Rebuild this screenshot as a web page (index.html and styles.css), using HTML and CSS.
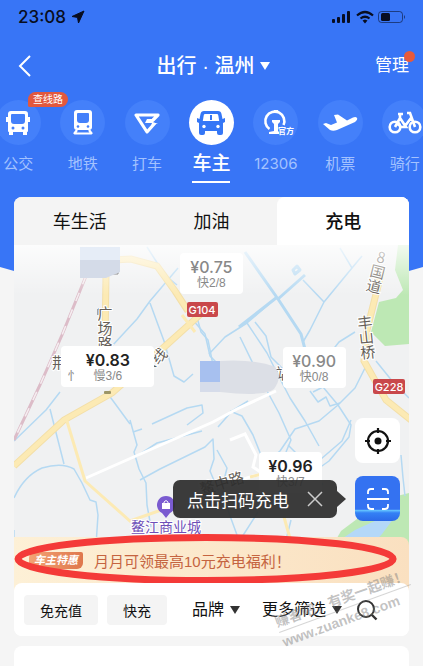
FILE: index.html
```html
<!DOCTYPE html>
<html lang="zh-CN">
<head>
  <meta charset="UTF-8">
  <meta name="viewport" content="width=device-width, initial-scale=1.0">
  <title>出行 · 温州</title>
  <link rel="stylesheet" href="styles.css">
</head>
<body>
  <div class="screen">
    <header class="hero">
      <div class="status">
        <span class="time">23:08</span>
        <svg width="14" height="14" viewBox="0 0 14 14"><path d="M13 1L1 6.500l5.500.900L7.500 13z" fill="#080d20" stroke="#080d20" stroke-linejoin="round"/></svg>
        <svg class="status-right" width="76" height="14" viewBox="0 0 76 14">
          <g fill="#080d20">
            <rect x="1" y="9" width="3" height="4" rx="1"/>
            <rect x="6" y="7" width="3" height="6" rx="1"/>
            <rect x="11" y="4" width="3" height="9" rx="1"/>
            <rect x="16" y="1" width="3" height="12" rx="1"/>
            <path d="M34 9.500l2.500 1-2.500 3-2.500-3z"/>
            <rect x="50" y="3" width="9" height="8" rx="1.500"/>
            <path d="M73 5q2 2 0 4z" opacity=".6"/>
          </g>
          <g fill="none" stroke="#080d20">
            <path d="M26 5.500q8-7 16 0M29.500 8.500q4.500-3.500 9 0" stroke-width="2.200"/>
            <rect x="47.500" y="1.500" width="24" height="11" rx="3" opacity=".55"/>
          </g>
        </svg>
      </div>

      <div class="navbar">
        <button class="back" aria-label="返回">
          <svg width="14" height="22" viewBox="0 0 14 22"><path d="M12 1L2 11l10 10" fill="none" stroke="#fff" stroke-width="2"/></svg>
        </button>
        <button class="city">出行 · 温州 <i class="arrow"></i></button>
        <a class="manage" href="#">管理</a>
      </div>

      <nav class="cats">
        <a class="cat" href="#">
          <span class="cat-icon">
            <svg width="26" height="26" viewBox="0 0 26 26">
              <path d="M6 1h14q3 0 3 3v3h2v5h-2v9q0 1-1 1v3h-4v-3H8v3H4v-3q-1 0-1-1v-9H1V7h2V4q0-3 3-3z" fill="#fff"/>
              <path d="M7 4h12q1 0 1 1v6q0 3-3 3H9q-3 0-3-3V5q0-1 1-1z" fill="#4480fa"/>
              <circle cx="8" cy="18" r="1.500" fill="#4480fa"/><circle cx="18" cy="18" r="1.500" fill="#4480fa"/>
            </svg>
          </span>
          <span class="cat-name">公交</span>
          <span class="cat-badge">查线路</span>
        </a>
        <a class="cat" href="#">
          <span class="cat-icon">
            <svg width="26" height="26" viewBox="0 0 26 26">
              <path d="M7 0h12q3 0 3 3v14q0 3-3 3H7q-3 0-3-3V3q0-3 3-3z" fill="#fff"/>
              <path d="M8 3h10q1 0 1 1v6q0 3-3 3h-6q-3 0-3-3V4q0-1 1-1z" fill="#4480fa"/>
              <circle cx="8" cy="16.500" r="1.300" fill="#4480fa"/><circle cx="18" cy="16.500" r="1.300" fill="#4480fa"/>
              <path d="M7 20l-3 4m15-4l3 4M5 23.500h16" stroke="#fff" stroke-width="2.200"/>
            </svg>
          </span>
          <span class="cat-name">地铁</span>
        </a>
        <a class="cat" href="#">
          <span class="cat-icon">
            <svg width="28" height="26" viewBox="0 0 28 26">
              <path d="M20 10l5-5H3l11 17 8-9" fill="none" stroke="#fff" stroke-width="3.200" stroke-linejoin="round"/>
              <path d="M14 9h8l-2 4h5l-7 3 1-3h-7z" fill="#fff"/>
            </svg>
          </span>
          <span class="cat-name">打车</span>
        </a>
        <a class="cat active" href="#">
          <span class="cat-icon">
            <svg width="30" height="28" viewBox="0 0 30 28">
              <path d="M8 2h14q3 0 3.500 3l1 5 2.500-1v4l-2 1v10q0 2-2 2h-2q-2 0-2-2v-2H9v2q0 2-2 2H5q-2 0-2-2V14l-2-1V9l2.500 1 1-5Q5 2 8 2z" fill="#3476f6"/>
              <path d="M9 5h12q1 0 1.200 1l1 6H6.800l1-6Q8 5 9 5z" fill="#fff"/>
              <path d="M14 6h2v5h-2z" fill="#3476f6"/>
              <circle cx="8" cy="17.500" r="1.700" fill="#fff"/><circle cx="22" cy="17.500" r="1.700" fill="#fff"/>
            </svg>
          </span>
          <span class="cat-name">车主</span>
        </a>
        <a class="cat" href="#">
          <span class="cat-icon">
            <svg class="rail" width="32" height="28" viewBox="0 0 32 28">
              <path d="M6.500 20a9.500 9.500 0 1 1 14-4" fill="none" stroke="#fff" stroke-width="2.600"/>
              <path d="M11 1h4l1 3h-6zM9 11h8v2l-2 2v7l1 1v2H6v-2l5-1v-7l-2-2z" fill="#fff"/>
              <text x="15" y="25" font-size="8" font-weight="700" fill="#fff">官方</text>
            </svg>
          </span>
          <span class="cat-name num">12306</span>
        </a>
        <a class="cat" href="#">
          <span class="cat-icon">
            <svg width="36" height="26" viewBox="0 0 36 26">
              <path d="M1 14l3-1 5 2 6-2.500L12 5l4-.5 9 6 6-3q3-1 4 .5t-2 4L15 20q-4 1.500-7 0z" fill="#fff"/>
            </svg>
          </span>
          <span class="cat-name">机票</span>
        </a>
        <a class="cat" href="#">
          <span class="cat-icon">
            <svg width="34" height="26" viewBox="0 0 34 26">
              <g fill="none" stroke="#fff" stroke-width="2.600">
                <circle cx="7" cy="17" r="5.300"/><circle cx="27" cy="17" r="5.300"/>
                <path d="M7 17l5-9 6 9h-5l-4-4M17 16l6-8M19 3h3l5 14M10 4h5M12 4v5"/>
              </g>
            </svg>
          </span>
          <span class="cat-name">骑行</span>
        </a>
      </nav>
    </header>

    <main class="card">
      <nav class="tabs">
        <a href="#">车生活</a>
        <a href="#">加油</a>
        <a class="active" href="#">充电</a>
      </nav>

      <div class="map">
        <svg class="map-base" viewBox="14 245 395 300" preserveAspectRatio="xMidYMid slice">
          <defs>
            <linearGradient id="fade" x1="0" y1="0" x2="0" y2="1">
              <stop offset="0" stop-color="#fff"/>
              <stop offset="1" stop-color="#fff" stop-opacity="0"/>
            </linearGradient>
          </defs>
          <rect x="14" y="245" width="395" height="300" fill="#f0f1f2"/>

          <!-- 绿地 -->
          <g fill="#bde8b4">
            <path d="M398 245h11v99l-24 2-14-14 8-30 17-4 7-8-8-20z"/>
            <path d="M333 545l8-14 24-18 24-15 20-5v52z"/>
          </g>
          <path d="M340 540l15-10 22-10 10-9 10 3-15 20-10 11z" fill="#b4d8f8"/>

          <!-- 水系 -->
          <g class="river">
            <path d="M147 247l18 28 12 10M178 268l-28 33-13 18-25 27M150 303l14 38 10 35 10 6 9-8M192 319l13 15 5 22 14 14"/>
            <path d="M14 498q10-22 28-30 20-6 32 1l8 14 8 17 6 2 2 13-2 30M14 530v15"/>
            <path d="M60 392l-14 18-32 31M50 409l14 55M127 394m3 26l7 25-3 7 5 17 7 14 1 22 4 22M108 394l22 30"/>
            <path d="M152 424l35-16 15-3 1 8-16 12M137 456l20-13 45-12M140 480l20-11 45-22 8-8 1 20-4 12 8 19"/>
            <path d="M247 323l20 30 9 18 14 27 15 23 14 25M255 322l11 14 5 21 12 12M276 298l-29 25-22 14-16 17"/>
            <path d="M303 280l21 22-14 28-7 12M340 248l12 20 10-12M352 268l-28 34"/>
            <path d="M240 337l20 41 19 35 12 27-5 12M355 332l-16 10-19 24M365 368l-10 20-17 17-15-18-10 5M338 405l13 20-2 12-20 24-24 17M338 405l-19 16-24 8-15 22-10 8"/>
            <path d="M376 361l17 21 16 16M230 411l12 5 11 19 8 20 3 35M218 427l14-16 16-10M288 445l25 25 10 15"/>
            <path d="M351 420l-9 21-35 30M401 455l2 23 2 18M217 450l10 18-5 20 7 25 8 22M258 512l-16 25M291 520l-5 20"/>
            <path d="M310 391l8 11 8-5 4 9 10-3M195 310l6 22 7 8 5 25M142 429l-9 3"/>
          </g>
          <g class="river thick">
            <path d="M245 252l33 47 23 35 5 19M276 298l-37 29M305 275l-27 24"/>
            <path d="M293 270l4-4 3 4-5 4z"/>
          </g>

          <!-- 道路 -->
          <g class="lane">
            <path d="M86 478l127-56 24-13 39-18M230 440l15-6 11 21-3 12 18 12M220 487l33-11 18-3"/>
          </g>
          <g class="road-edge">
            <path d="M14 466l50-46 48-27 50-44 30-27 13-12M105 345l1-70 8-15 17-1 26 7 18 25 13 20M382 270l-15 60-3 31 22 39 25 20"/>
          </g>
          <g class="road">
            <path d="M14 466l50-46 48-27 50-44 30-27 13-12M105 345l1-70 8-15 17-1 26 7 18 25 13 20M382 270l-15 60-3 31 22 39 25 20"/>
          </g>
          <path class="road thin" d="M66 418l19 63 45 40 34-12M250 477l20-5M284 517l7 25M182 315l13 17"/>
          <path d="M86 276L62 335 40 385 14 440" fill="none" stroke="#dcbcc8" stroke-width="3"/>
          <path d="M86 276L62 335 40 385 14 440" fill="none" stroke="#f5eef1" stroke-width="1.500" stroke-dasharray="9 9"/>
          <rect x="104" y="391" width="7" height="3" rx="1" fill="#9c9567"/>
          <path d="M98 315v-6h12M112 274h6v-4" fill="none" stroke="#555" stroke-width="1"/>

          <!-- 地名 -->
          <g class="road-name">
            <text class="down" x="105" y="306">广场路</text>
            <text x="52" y="368">荆</text>
            <text x="146" y="375" transform="rotate(-42 146 375)">公线</text>
            <text class="down" x="364" y="315" transform="rotate(-6 364 315)">丰山桥</text>
            <text class="down" x="383" y="250" transform="rotate(14 383 250)">8国道</text>
            <text x="202" y="495" transform="rotate(-17 202 495)">鳌中路</text>
            <text x="275" y="379">站</text>
          </g>
          <rect x="187" y="302" width="31" height="15" rx="2" fill="#c9484b"/>
          <rect x="373" y="379" width="32" height="15" rx="2" fill="#c9484b"/>
          <g class="shield">
            <text x="202" y="314">G104</text>
            <text x="389" y="391">G228</text>
          </g>

          <path d="M166 518l-4-5a9 9 0 1 1 8 0z" fill="#7a5bd0"/>
          <path d="M162 503h8v6h-8z" fill="#fff"/>
          <path d="M164 503v-1q2-3 4 0v1" fill="none" stroke="#fff"/>
          <text class="mall" x="131" y="532">鳌江商业城</text>

          <rect x="14" y="245" width="395" height="50" fill="url(#fade)" opacity=".8"/>
          <path d="M80 247h40v13H80z" fill="#e6edf7"/>
          <path d="M80 260h40v12l-14 6H80z" fill="#d4dbe8"/>
          <path d="M200 361h20v21h-20z" fill="#a7c0ef"/>
          <path d="M200 382h20v10h-20z" fill="#d6dcea"/>
          <path d="M220 361q35-2 55 6 8 10-1 22-10 8-54 3z" fill="#dcdfe6"/>
        </svg>

        <div class="pin pin-075"><b>¥0.75</b><span>快2/8</span></div>
        <div class="pin pin-083 strong"><i class="cut">忄</i><b>¥0.83</b><span>慢3/6</span></div>
        <div class="pin pin-090"><b>¥0.90</b><span>快0/8</span></div>
        <div class="pin pin-096 strong"><b>¥0.96</b><span>快3/7</span></div>

        <div class="tools">
          <button class="tool" aria-label="定位">
            <svg width="26" height="26" viewBox="0 0 26 26">
              <circle cx="13" cy="13" r="10" fill="none" stroke="#111" stroke-width="2.200"/>
              <circle cx="13" cy="13" r="3.500" fill="#111"/>
              <path d="M13 0v5M13 21v5M0 13h5M21 13h5" stroke="#111" stroke-width="2.200"/>
            </svg>
          </button>
          <button class="tool scan" aria-label="扫码充电">
            <svg width="24" height="24" viewBox="0 0 24 24">
              <path d="M2 7V5q0-3 3-3h3M16 2h3q3 0 3 3v2M2 17v2q0 3 3 3h3M16 22h3q3 0 3-3v-2M1 12h22" fill="none" stroke="#fff" stroke-width="1.800"/>
            </svg>
          </button>
        </div>
        <div class="tip">
          点击扫码充电
          <button aria-label="关闭">
            <svg width="16" height="16" viewBox="0 0 16 16"><path d="M1 1l14 14M15 1L1 15" stroke="#ccc" stroke-width="1.500"/></svg>
          </button>
        </div>
      </div>

      <a class="banner" href="#">
        <span class="banner-tag">车主特惠</span>
        <span>月月可领最高10元充电福利！</span>
        <svg class="circle-mark" viewBox="0 0 382 50" preserveAspectRatio="none">
          <ellipse cx="191" cy="25" rx="187" ry="21.500" fill="none" stroke="#f43a38" stroke-width="7"/>
        </svg>
      </a>

      <div class="filters">
        <button class="chip">免充值</button>
        <button class="chip">快充</button>
        <label class="drop brand">
          <select aria-label="品牌"><option>品牌</option></select>
          <i class="arrow"></i>
        </label>
        <label class="drop">
          <select aria-label="更多筛选"><option>更多筛选</option></select>
          <i class="arrow"></i>
        </label>
        <button class="search" aria-label="搜索">
          <svg width="22" height="22" viewBox="0 0 22 22"><circle cx="10" cy="10" r="8" fill="none" stroke="#333" stroke-width="2"/><path d="M15.500 15.500l5 5" stroke="#333" stroke-width="2.400"/></svg>
        </button>
        <div class="watermark">
          <span>赚客吧，有奖一起赚！</span>
          <span>www.zuanke8.com</span>
        </div>
      </div>
    </main>

    <section class="next-card"></section>
  </div>
</body>
</html>
```
FILE: styles.css
```css
* {
  box-sizing: border-box;
}
body {
  margin: 0;
  background: #fff;
  color: #111;
  font-family: "Liberation Sans", "Noto Sans CJK SC", sans-serif;
}
a {
  color: inherit;
  text-decoration: none;
}
button {
  border: 0;
  padding: 0;
  background: none;
  color: inherit;
  font: inherit;
  white-space: nowrap;
}
svg {
  display: block;
}
.screen {
  min-height: 100vh;
  margin-right: 4px;
  background: #f5f5f5;
  overflow: hidden;
}

/* 顶部 */
.hero {
  background: #3875f6;
  color: #fff;
  padding-bottom: 96px;
  clip-path: polygon(0 0, 100% 0, 100% 267px, 90% 100%, 10% 100%, 0 267px);
}
.status {
  display: flex;
  align-items: center;
  gap: 5px;
  height: 34px;
  padding: 0 18px;
  color: #080d20;
}
.time {
  font: 500 17px Inter, sans-serif;
}
.status-right {
  margin-left: auto;
  margin-right: -2px;
}
.navbar {
  display: grid;
  grid-template-columns: 1fr auto 1fr;
  align-items: center;
  height: 64px;
  padding: 0 14px 0 18px;
}
.back {
  justify-self: start;
}
.city {
  display: flex;
  align-items: center;
  gap: 6px;
  font-size: 20px;
  line-height: 24px;
  font-weight: 500;
}
.arrow {
  border: 5px solid transparent;
  border-top: 8px solid currentColor;
  border-bottom: 0;
}
.manage {
  position: relative;
  justify-self: end;
  font-size: 17px;
  line-height: 24px;
}
.manage::after {
  content: "";
  position: absolute;
  top: -3px;
  right: -6px;
  width: 11px;
  height: 11px;
  border-radius: 50%;
  background: #e65a3c;
}
.cats {
  display: flex;
  margin: 0 -14px;
  padding-top: 2px;
}
.cat {
  position: relative;
  flex: 1;
  display: flex;
  flex-direction: column;
  align-items: center;
  gap: 8px;
  font-size: 15px;
  color: #a3c2ff;
}
.cat-icon {
  display: flex;
  align-items: center;
  justify-content: center;
  width: 45px;
  height: 45px;
  border-radius: 50%;
  background: #4480fa;
}
.rail {
  margin-left: 6px;
}
.cat-name {
  height: 30px;
  line-height: 22px;
}
.num {
  font-family: Inter, sans-serif;
}
.cat.active {
  color: #fff;
  font-size: 19px;
  font-weight: 500;
}
.active .cat-icon {
  background: #fff;
}
.active .cat-name {
  border-bottom: 2px solid #fff;
}
.cat-badge {
  position: absolute;
  top: -8px;
  left: 42px;
  padding: 0 5px;
  border-radius: 8px 8px 8px 2px;
  background: #e2583e;
  color: #fff;
  font-size: 10px;
  line-height: 15px;
  white-space: nowrap;
}

/* 主卡片 */
.card {
  position: relative;
  margin: -82px 14px 10px;
  border-radius: 8px;
  background: #fff;
}
.tabs {
  display: flex;
  height: 48px;
  border-radius: 8px 8px 0 0;
  background: #f4f4f4;
}
.tabs a {
  flex: 1;
  text-align: center;
  font-size: 18px;
  line-height: 50px;
}
.tabs .active {
  background: #fff;
  border-radius: 8px 8px 0 0;
  font-weight: 500;
}

/* 地图 */
.map {
  position: relative;
  aspect-ratio: 395 / 300;
}
.map-base {
  width: 100%;
  height: 100%;
  font-family: "Noto Sans CJK SC", sans-serif;
}
.river {
  fill: none;
  stroke: #b5d9f2;
  stroke-width: 1.5;
  stroke-linejoin: round;
}
.thick {
  stroke-width: 3;
}
.lane {
  fill: none;
  stroke: #fff;
  stroke-width: 3;
}
.road-edge {
  fill: none;
  stroke: #f3dfa8;
  stroke-width: 7;
}
.road {
  fill: none;
  stroke: #fceab4;
  stroke-width: 5;
}
.road.thin {
  stroke-width: 3;
}
.road-name {
  font-size: 15px;
  fill: #665f58;
  stroke: #fff;
  stroke-width: 2px;
  paint-order: stroke;
}
.down {
  writing-mode: vertical-rl;
  text-orientation: upright;
}
.shield {
  font: 500 11px Inter, sans-serif;
  fill: #fff;
  text-anchor: middle;
}
.mall {
  font-size: 14px;
  fill: #6e4fb8;
  stroke: #fff;
  stroke-width: 2px;
  paint-order: stroke;
}
.pin {
  position: absolute;
  display: flex;
  flex-direction: column;
  align-items: center;
  width: 63px;
  height: 41px;
  padding-top: 4px;
  border-radius: 4px;
  background: #fff;
  color: #888;
}
.pin b {
  font: 500 16px/20px Inter, sans-serif;
}
.pin span {
  font-size: 12px;
  line-height: 13px;
}
.pin .cut {
  position: absolute;
  left: 6px;
  top: 24px;
  font-size: 12px;
  font-style: normal;
  line-height: 13px;
}
.strong b {
  color: #222;
  font-weight: 600;
}
.pin-075 {
  left: 42%;
  top: 8px;
}
.pin-083 {
  left: 12%;
  top: 101px;
  width: 93px;
}
.pin-090 {
  left: 68%;
  top: 102px;
}
.pin-096 {
  left: 62%;
  top: 207px;
}
.tools {
  position: absolute;
  right: 9px;
  top: 173px;
  display: grid;
  gap: 13px;
}
.tool {
  display: flex;
  align-items: center;
  justify-content: center;
  width: 45px;
  height: 45px;
  border-radius: 8px;
  background: #fff;
}
.scan {
  background: linear-gradient(#3472f1 74%, #65c5ff 76%, #3481f5 82%, #2c69e9);
}
.tip {
  position: absolute;
  right: 72px;
  top: 235px;
  display: flex;
  align-items: center;
  gap: 18px;
  height: 38px;
  padding: 0 14px;
  border-radius: 7px;
  background: rgba(45, 45, 45, 0.93);
  color: #fff;
  font-size: 17px;
  white-space: nowrap;
}
.tip::after {
  content: "";
  position: absolute;
  left: 100%;
  top: 11px;
  border: 8px solid transparent;
  border-left: 9px solid rgba(45, 45, 45, 0.93);
  border-right: 0;
}

/* 活动横幅 */
.banner {
  position: relative;
  display: flex;
  align-items: center;
  gap: 11px;
  height: 54px;
  margin-top: -8px;
  padding: 0 15px 8px;
  border-radius: 0 8px 0 0;
  background: linear-gradient(90deg, #fdf0d6, #fae0c0);
  color: #c56440;
  font-size: 15px;
}
.banner-tag {
  padding: 0 5px;
  border-radius: 6px 2px 6px 2px;
  background: linear-gradient(90deg, #f3a374, #df774c);
  color: #fff;
  font-size: 11px;
  font-weight: 700;
  font-style: italic;
  line-height: 17px;
}
.circle-mark {
  position: absolute;
  left: 0;
  top: -3px;
  width: 97%;
  height: 50px;
}

/* 筛选 */
.filters {
  position: relative;
  display: flex;
  align-items: center;
  height: 53px;
  margin-top: -8px;
  padding: 0 31px 0 10px;
  border-radius: 8px;
  background: #fff;
}
.chip {
  height: 30px;
  margin-right: 9px;
  padding: 0 16px;
  border-radius: 4px;
  background: #f4f4f4;
  font-size: 14px;
}
.drop {
  display: flex;
  align-items: center;
  gap: 5px;
  font-size: 16px;
}
.drop select {
  appearance: none;
  border: 0;
  padding: 0;
  background: none;
  color: inherit;
  font: inherit;
}
.brand {
  margin: 0 22px 0 16px;
}
.drop .arrow {
  color: #333;
}
.search {
  margin-left: auto;
}
.watermark {
  position: absolute;
  right: -6px;
  top: 5px;
  display: grid;
  color: rgba(120, 120, 120, 0.45);
  font-size: 14px;
  font-weight: 700;
  line-height: 20px;
  transform: rotate(-20deg);
  pointer-events: none;
}
.watermark span + span {
  border-top: 1px solid rgba(120, 120, 120, 0.3);
}
.next-card {
  height: 60px;
  margin: 0 14px -40px;
  border-radius: 8px;
  background: #fff;
}
```
